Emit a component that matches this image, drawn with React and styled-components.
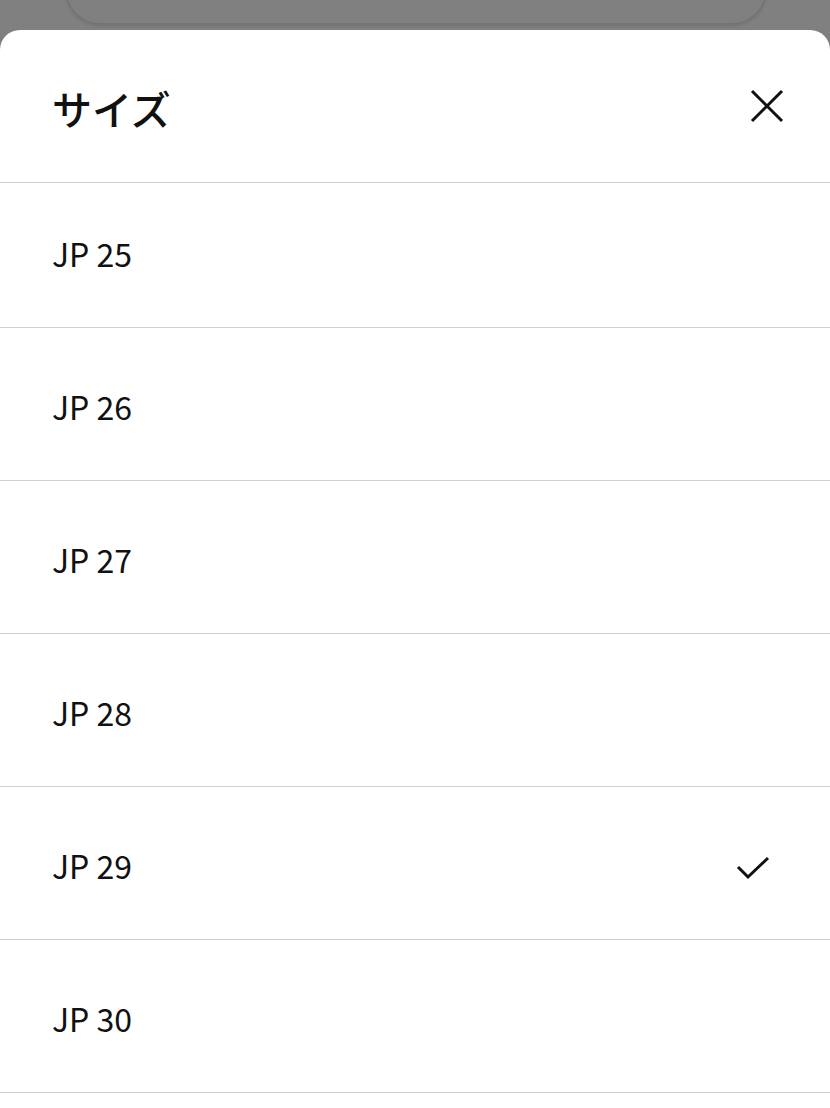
import React from "react";
import styled, { createGlobalStyle } from "styled-components";

const GlobalStyle = createGlobalStyle`
  html, body {
    margin: 0;
    padding: 0;
    background: #808080;
  }
  body {
    font-family: "Noto Sans CJK JP", "Noto Sans", sans-serif;
    color: #111;
  }
`;

const sizes = ["JP 25", "JP 26", "JP 27", "JP 28", "JP 29", "JP 30"];
const selected = "JP 29";

export default function App() {
  return (
    <>
      <GlobalStyle />
      <Backdrop>
        <Peek>
          <GhostButton />
        </Peek>
        <Sheet>
          <Header>
            <Title>サイズ</Title>
            <CloseButton aria-label="閉じる">
              <svg width="34" height="34" viewBox="0 0 34 34">
                <path d="M2 2 L32 32 M32 2 L2 32" stroke="#111" strokeWidth="3" fill="none" />
              </svg>
            </CloseButton>
          </Header>
          <List>
            {sizes.map((s, i) => (
              <Row key={s} $first={i === 0}>
                <Label>{s}</Label>
                {s === selected && (
                  <svg width="34" height="24" viewBox="0 0 34 24">
                    <path d="M2 11 L12 21 L32 2" stroke="#111" strokeWidth="3" fill="none" />
                  </svg>
                )}
              </Row>
            ))}
          </List>
        </Sheet>
      </Backdrop>
    </>
  );
}

const Backdrop = styled.div`
  width: 830px;
  height: 1108px;
  background: #808080;
  display: flex;
  flex-direction: column;
  overflow: hidden;
`;

const Peek = styled.div`
  height: 30px;
  flex: none;
  display: flex;
  justify-content: center;
  overflow: hidden;
`;

const GhostButton = styled.div`
  width: 702px;
  height: 70px;
  margin-top: -45px;
  margin-left: 2px;
  border: 2px solid #747474;
  border-radius: 40px;
  box-shadow: 0 2px 3px rgba(0, 0, 0, 0.08);
  box-sizing: border-box;
`;

const Sheet = styled.div`
  flex: 1;
  background: #fff;
  border-radius: 20px 20px 0 0;
  display: flex;
  flex-direction: column;
`;

const Header = styled.div`
  box-sizing: border-box;
  height: 153px;
  border-bottom: 1px solid #d0d0d0;
  display: flex;
  align-items: center;
  justify-content: space-between;
  padding: 4px 46px 0 52px;
`;

const Title = styled.h2`
  margin: 0;
  font-family: "Noto Sans CJK JP", sans-serif;
  font-size: 40px;
  font-weight: 500;
  letter-spacing: 0;
`;

const CloseButton = styled.button`
  border: none;
  background: none;
  padding: 0;
  display: flex;
  margin-top: -4px;
  cursor: pointer;
`;

const List = styled.div`
  display: flex;
  flex-direction: column;
`;

const Row = styled.div`
  box-sizing: border-box;
  height: ${(p) => (p.$first ? "145px" : "153px")};
  padding: ${(p) => (p.$first ? "2px" : "10px")} 60px 0 52px;
  border-bottom: 1px solid #d0d0d0;
  display: flex;
  align-items: center;
  justify-content: space-between;
`;

const Label = styled.span`
  margin-top: -6px;
  font-family: "Noto Sans CJK JP", "Noto Sans", sans-serif;
  font-size: 32px;
  font-weight: 400;
`;
